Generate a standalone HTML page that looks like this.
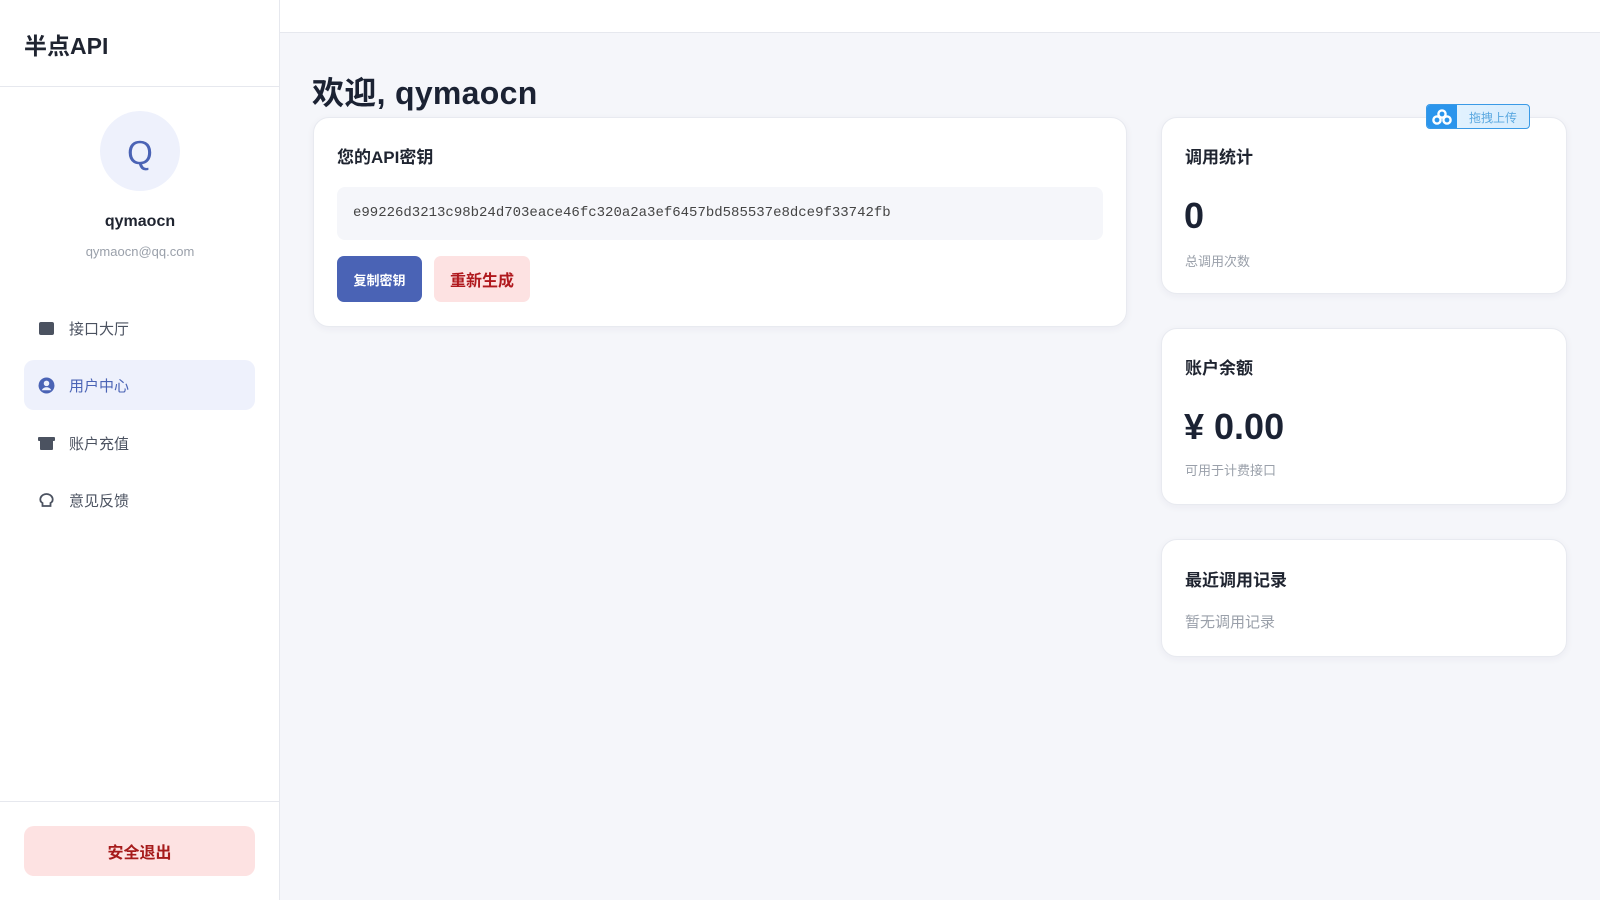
<!DOCTYPE html>
<html><head><meta charset="utf-8"><style>
*{box-sizing:border-box;margin:0;padding:0}
body{width:1600px;height:900px;overflow:hidden;background:#f5f6fa;font-family:"Liberation Sans","Noto Sans CJK SC",sans-serif;color:#1f2430;position:relative}
.abs{position:absolute}
.side{left:0;top:0;width:280px;height:900px;background:#fff;border-right:1px solid #e6e8ee}
.top{left:280px;top:0;width:1320px;height:33px;background:#fff;border-bottom:1px solid #e6e8ee}
.card{background:#fff;border:1px solid #e8eaf0;border-radius:16px;box-shadow:0 2px 8px rgba(30,40,70,.05)}
.nav{left:24px;width:231px;height:50px;display:flex;align-items:center;padding-left:14px;font-size:15px;color:#4b5260}
.nav svg{margin-right:14px}
.t{font-weight:bold;font-size:17px;color:#1f2430}
.g{font-size:13px;color:#9aa0aa}
.num{font-weight:bold;font-size:36px;color:#1b2233}
</style></head><body>
<div class="abs side"></div>
<div class="abs top"></div>
<div class="abs" style="left:24px;top:27px;font-size:23px;font-weight:bold;color:#1f2430">半点API</div>
<div class="abs" style="left:0;top:86px;width:280px;border-top:1px solid #e6e8ee"></div>
<div class="abs" style="left:100px;top:111px;width:80px;height:80px;border-radius:50%;background:#eef1fc;color:#4a63b5;font-size:33px;display:flex;align-items:center;justify-content:center;padding-top:4px">Q</div>
<div class="abs" style="left:0;width:280px;top:213px;text-align:center;font-size:16px;font-weight:bold">qymaocn</div>
<div class="abs g" style="left:0;width:280px;top:244px;text-align:center">qymaocn@qq.com</div>

<div class="abs nav" style="top:303px"><svg width="17" height="15"><rect x="1" y="1" width="15" height="13" rx="2" fill="#4b5260"/></svg>接口大厅</div>
<div class="abs nav" style="top:360px;background:#eef1fc;border-radius:10px;color:#4a63b5"><svg width="17" height="17" viewBox="0 0 16 16"><circle cx="8" cy="8" r="7.5" fill="#4a63b5"/><circle cx="8" cy="6" r="2.6" fill="#eef1fc"/><path d="M3.5 12.5c1-2 2.6-2.8 4.5-2.8s3.5.8 4.5 2.8" fill="#eef1fc"/></svg>用户中心</div>
<div class="abs nav" style="top:418px"><svg width="17" height="15"><rect x="0" y="1" width="17" height="4" rx="1" fill="#4b5260"/><rect x="2" y="4" width="13" height="10" rx="1" fill="#4b5260"/></svg>账户充值</div>
<div class="abs nav" style="top:475px"><svg width="17" height="16" viewBox="0 0 16 16"><path d="M4 11c-2-1-2.5-3-2-5 1-3 4-4 6-4s5 1 6 4c.5 2 0 4-2 5v3H4z" fill="none" stroke="#4b5260" stroke-width="1.8"/></svg>意见反馈</div>

<div class="abs" style="left:0;top:801px;width:280px;border-top:1px solid #e6e8ee"></div>
<div class="abs" style="left:24px;top:826px;width:231px;height:50px;background:#fde2e2;border-radius:10px;display:flex;align-items:center;justify-content:center;color:#a61b1b;font-weight:bold;font-size:16px">安全退出</div>

<div class="abs" style="left:312px;top:68px;font-size:32px;font-weight:bold;color:#1b2233;letter-spacing:0.3px">欢迎, qymaocn</div>

<div class="abs card" style="left:313px;top:117px;width:814px;height:210px"></div>
<div class="abs t" style="left:337px;top:143px">您的API密钥</div>
<div class="abs" style="left:337px;top:187px;width:766px;height:53px;background:#f5f6fa;border-radius:8px;font-family:'Liberation Mono',monospace;font-size:14px;color:#444;padding:18px 0 0 16px">e99226d3213c98b24d703eace46fc320a2a3ef6457bd585537e8dce9f33742fb</div>
<div class="abs" style="left:337px;top:256px;width:85px;height:46px;background:#4a63b5;border-radius:7px;color:#fff;font-weight:bold;font-size:13px;display:flex;align-items:center;justify-content:center">复制密钥</div>
<div class="abs" style="left:434px;top:256px;width:96px;height:46px;background:#fde2e2;border-radius:7px;color:#b0191e;font-weight:bold;font-size:16px;display:flex;align-items:center;justify-content:center">重新生成</div>

<div class="abs card" style="left:1161px;top:117px;width:406px;height:177px"></div>
<div class="abs t" style="left:1185px;top:143px">调用统计</div>
<div class="abs num" style="left:1184px;top:195px">0</div>
<div class="abs g" style="left:1185px;top:251px">总调用次数</div>

<div class="abs" style="left:1426px;top:104px;width:104px;height:25px;border:1px solid #3a9ae6;border-radius:4px;background:linear-gradient(90deg,#e6f4ff,#d6ecfd);overflow:hidden">
<div style="position:absolute;left:0;top:0;width:30px;height:25px;background:#2b95ec"></div>
<svg style="position:absolute;left:5px;top:4px" width="20" height="16" viewBox="0 0 20 16"><circle cx="10" cy="5" r="3.6" fill="none" stroke="#fff" stroke-width="2.4"/><circle cx="5" cy="11" r="3.6" fill="none" stroke="#fff" stroke-width="2.4"/><circle cx="15" cy="11" r="3.6" fill="none" stroke="#fff" stroke-width="2.4"/></svg>
<div style="position:absolute;left:42px;top:4px;font-size:12px;color:#5aa8e0">拖拽上传</div></div>

<div class="abs card" style="left:1161px;top:328px;width:406px;height:177px"></div>
<div class="abs t" style="left:1185px;top:354px">账户余额</div>
<div class="abs num" style="left:1184px;top:406px">¥ 0.00</div>
<div class="abs g" style="left:1185px;top:460px">可用于计费接口</div>

<div class="abs card" style="left:1161px;top:539px;width:406px;height:118px"></div>
<div class="abs t" style="left:1185px;top:566px">最近调用记录</div>
<div class="abs" style="left:1185px;top:611px;font-size:15px;color:#9aa0aa">暂无调用记录</div>
</body></html>
